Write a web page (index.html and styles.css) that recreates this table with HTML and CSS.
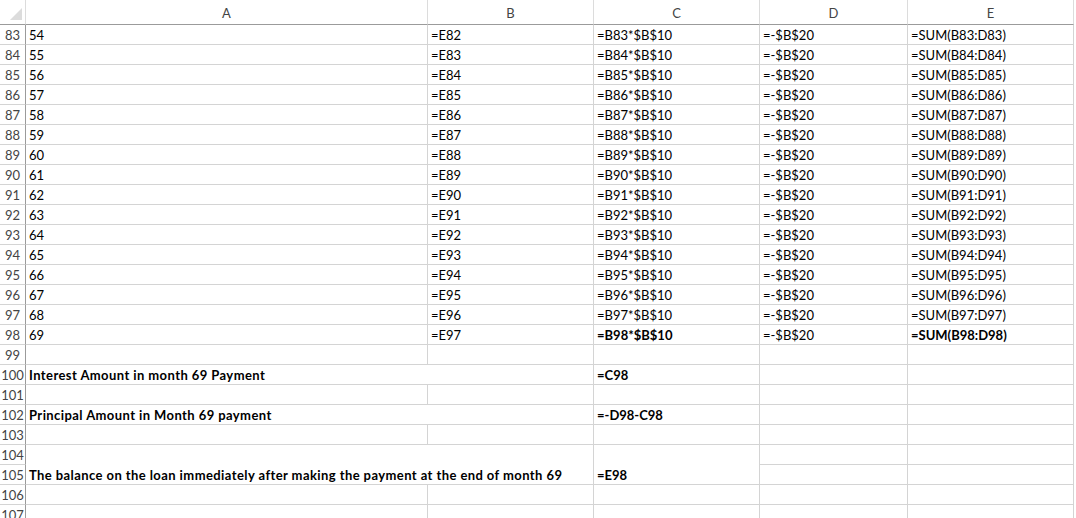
FILE: index.html
```html
<!DOCTYPE html>
<html>
<head>
<meta charset="utf-8">
<link rel="stylesheet" href="styles.css">
</head>
<body>
<div class="sheet">
  <div class="ch corner"><svg width="26" height="25" viewBox="0 0 26 25"><polygon points="10,20 22,20 22,8" fill="#dcdcdc"/></svg></div>
  <div class="ch">A</div><div class="ch">B</div><div class="ch">C</div><div class="ch">D</div><div class="ch">E</div>

  <div class="rh">83</div><div class="c">54</div><div class="c">=E82</div><div class="c">=B83*$B$10</div><div class="c">=-$B$20</div><div class="c">=SUM(B83:D83)</div>
  <div class="rh">84</div><div class="c">55</div><div class="c">=E83</div><div class="c">=B84*$B$10</div><div class="c">=-$B$20</div><div class="c">=SUM(B84:D84)</div>
  <div class="rh">85</div><div class="c">56</div><div class="c">=E84</div><div class="c">=B85*$B$10</div><div class="c">=-$B$20</div><div class="c">=SUM(B85:D85)</div>
  <div class="rh">86</div><div class="c">57</div><div class="c">=E85</div><div class="c">=B86*$B$10</div><div class="c">=-$B$20</div><div class="c">=SUM(B86:D86)</div>
  <div class="rh">87</div><div class="c">58</div><div class="c">=E86</div><div class="c">=B87*$B$10</div><div class="c">=-$B$20</div><div class="c">=SUM(B87:D87)</div>
  <div class="rh">88</div><div class="c">59</div><div class="c">=E87</div><div class="c">=B88*$B$10</div><div class="c">=-$B$20</div><div class="c">=SUM(B88:D88)</div>
  <div class="rh">89</div><div class="c">60</div><div class="c">=E88</div><div class="c">=B89*$B$10</div><div class="c">=-$B$20</div><div class="c">=SUM(B89:D89)</div>
  <div class="rh">90</div><div class="c">61</div><div class="c">=E89</div><div class="c">=B90*$B$10</div><div class="c">=-$B$20</div><div class="c">=SUM(B90:D90)</div>
  <div class="rh">91</div><div class="c">62</div><div class="c">=E90</div><div class="c">=B91*$B$10</div><div class="c">=-$B$20</div><div class="c">=SUM(B91:D91)</div>
  <div class="rh">92</div><div class="c">63</div><div class="c">=E91</div><div class="c">=B92*$B$10</div><div class="c">=-$B$20</div><div class="c">=SUM(B92:D92)</div>
  <div class="rh">93</div><div class="c">64</div><div class="c">=E92</div><div class="c">=B93*$B$10</div><div class="c">=-$B$20</div><div class="c">=SUM(B93:D93)</div>
  <div class="rh">94</div><div class="c">65</div><div class="c">=E93</div><div class="c">=B94*$B$10</div><div class="c">=-$B$20</div><div class="c">=SUM(B94:D94)</div>
  <div class="rh">95</div><div class="c">66</div><div class="c">=E94</div><div class="c">=B95*$B$10</div><div class="c">=-$B$20</div><div class="c">=SUM(B95:D95)</div>
  <div class="rh">96</div><div class="c">67</div><div class="c">=E95</div><div class="c">=B96*$B$10</div><div class="c">=-$B$20</div><div class="c">=SUM(B96:D96)</div>
  <div class="rh">97</div><div class="c">68</div><div class="c">=E96</div><div class="c">=B97*$B$10</div><div class="c">=-$B$20</div><div class="c">=SUM(B97:D97)</div>
  <div class="rh">98</div><div class="c">69</div><div class="c">=E97</div><div class="c b">=B98*$B$10</div><div class="c">=-$B$20</div><div class="c b">=SUM(B98:D98)</div>

  <div class="rh">99</div><div class="c"></div><div class="c"></div><div class="c"></div><div class="c"></div><div class="c"></div>
  <div class="rh">100</div><div class="c b lbl span2">Interest Amount in month 69 Payment</div><div class="c b">=C98</div><div class="c"></div><div class="c"></div>
  <div class="rh">101</div><div class="c"></div><div class="c"></div><div class="c"></div><div class="c"></div><div class="c"></div>
  <div class="rh">102</div><div class="c b lbl span2">Principal Amount in Month 69 payment</div><div class="c b">=-D98-C98</div><div class="c"></div><div class="c"></div>
  <div class="rh">103</div><div class="c"></div><div class="c"></div><div class="c"></div><div class="c"></div><div class="c"></div>
  <div class="rh">104</div><div class="c b lbl span2 tall">The balance on the loan immediately after making the payment at the end of month 69</div><div class="c b tall">=E98</div><div class="c"></div><div class="c"></div>
  <div class="rh">105</div><div class="c"></div><div class="c"></div>
  <div class="rh">106</div><div class="c"></div><div class="c"></div><div class="c"></div><div class="c"></div><div class="c"></div>
  <div class="rh">107</div><div class="c"></div><div class="c"></div><div class="c"></div><div class="c"></div><div class="c"></div>
</div>
</body>
</html>
```
FILE: styles.css
```css
html, body {
  margin: 0;
  padding: 0;
  background: #fff;
  overflow: hidden;
}
body {
  width: 1076px;
  height: 518px;
  font-family: Lato, "Open Sans", sans-serif;
  font-size: 13px;
  color: #000;
}
.sheet {
  display: grid;
  grid-template-columns: 26px 402px 166px 166px 148px 166px;
  grid-template-rows: 25px;
  grid-auto-rows: 20px;
}
.sheet > div {
  box-sizing: border-box;
  border-right: 1px solid #d4d4d4;
  border-bottom: 1px solid #d4d4d4;
  white-space: nowrap;
  overflow: visible;
}
.ch {
  display: flex;
  align-items: center;
  justify-content: center;
  color: #444;
  border-bottom-color: #9b9b9b !important;
  border-right-color: #dcdcdc !important;
  padding-top: 2px;
}
.corner {
  padding: 0 !important;
  display: block !important;
}
.corner svg { display: block; }
.rh {
  display: flex;
  align-items: flex-end;
  justify-content: center;
  color: #444;
  border-right-color: #9b9b9b !important;
  padding-bottom: 1px;
  line-height: 16px;
}
.c {
  display: flex;
  align-items: flex-end;
  padding: 0 3px 1px;
  line-height: 16px;
}
.b { font-weight: bold; }
.lbl { letter-spacing: 0.42px; }
.span2 { grid-column: span 2; }
.tall { grid-row: span 2; }
```
